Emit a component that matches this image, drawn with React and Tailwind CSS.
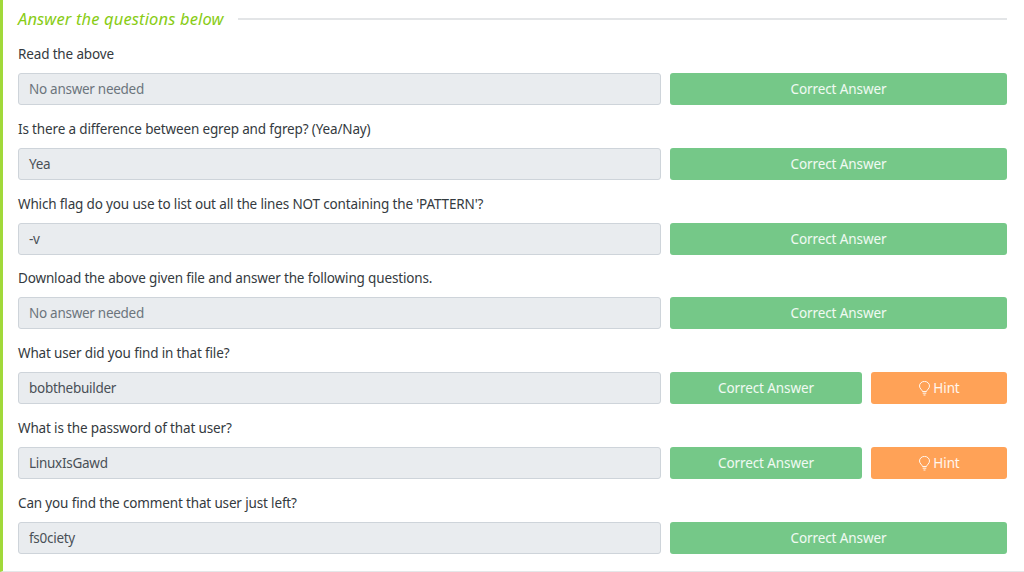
import React from "react";

const rows = [
  { q: "Read the above", a: "No answer needed", muted: true },
  { q: "Is there a difference between egrep and fgrep? (Yea/Nay)", a: "Yea" },
  { q: "Which flag do you use to list out all the lines NOT containing the 'PATTERN'?", a: "-v" },
  { q: "Download the above given file and answer the following questions.", a: "No answer needed", muted: true },
  { q: "What user did you find in that file?", a: "bobthebuilder", hint: true },
  { q: "What is the password of that user?", a: "LinuxIsGawd", hint: true },
  { q: "Can you find the comment that user just left?", a: "fs0ciety" },
];

function Bulb() {
  return (
    <svg width="13" height="15" viewBox="0 0 13 15" fill="none" stroke="currentColor" strokeWidth="1" className="mr-[2px]">
      <path d="M4.5 10.5C4.2 8.8 1.5 7.6 1.5 5A5 4.6 0 0 1 11.5 5C11.5 7.6 8.8 8.8 8.5 10.5Z" />
      <path d="M4.7 12.2H8.3M5.5 14H7.5" />
    </svg>
  );
}

function Row({ q, a, muted, hint }) {
  return (
    <div className="mb-[10.84px]">
      <p className="h-[32px] pt-[1px] text-[13.5px] leading-[24px] tracking-[-0.15px] text-[#343a40]">{q}</p>
      <div className="flex h-[32px] gap-[9px]">
        <div
          className={`flex w-[643px] items-center rounded-[3px] border border-[#ced4da] bg-[#e9ecef] px-[10px] text-[13.5px] tracking-[-0.28px] ${
            muted ? "text-[#6c757d]" : "text-[#495057]"
          }`}
        >
          {a}
        </div>
        <button className="flex flex-1 items-center justify-center rounded-[3px] bg-[#75c888] text-[13.5px] tracking-[-0.1px] text-white/90">
          Correct Answer
        </button>
        {hint && (
          <button className="flex w-[136px] items-center justify-center rounded-[3px] bg-[#ffa257] text-[13.5px] tracking-[-0.1px] text-white/90">
            <Bulb />
            Hint
          </button>
        )}
      </div>
    </div>
  );
}

export default function App() {
  return (
    <div className="h-[572px] w-[1024px] overflow-hidden border-b border-l-[3px] border-b-[#e5e7e9] border-l-[#a1d93a] bg-white pl-[15px] pr-[17px] font-['Noto_Sans',sans-serif]">
      <div className="flex h-[38px] items-center gap-[14px]">
        <h2 className="text-[16.5px] tracking-[0.14px] italic text-[#88cc14]">Answer the questions below</h2>
        <div className="h-[2px] flex-1 bg-[#e3e5e7]" />
      </div>
      <div className="mt-[3px]">
        {rows.map((r) => (
          <Row key={r.q} {...r} />
        ))}
      </div>
    </div>
  );
}
